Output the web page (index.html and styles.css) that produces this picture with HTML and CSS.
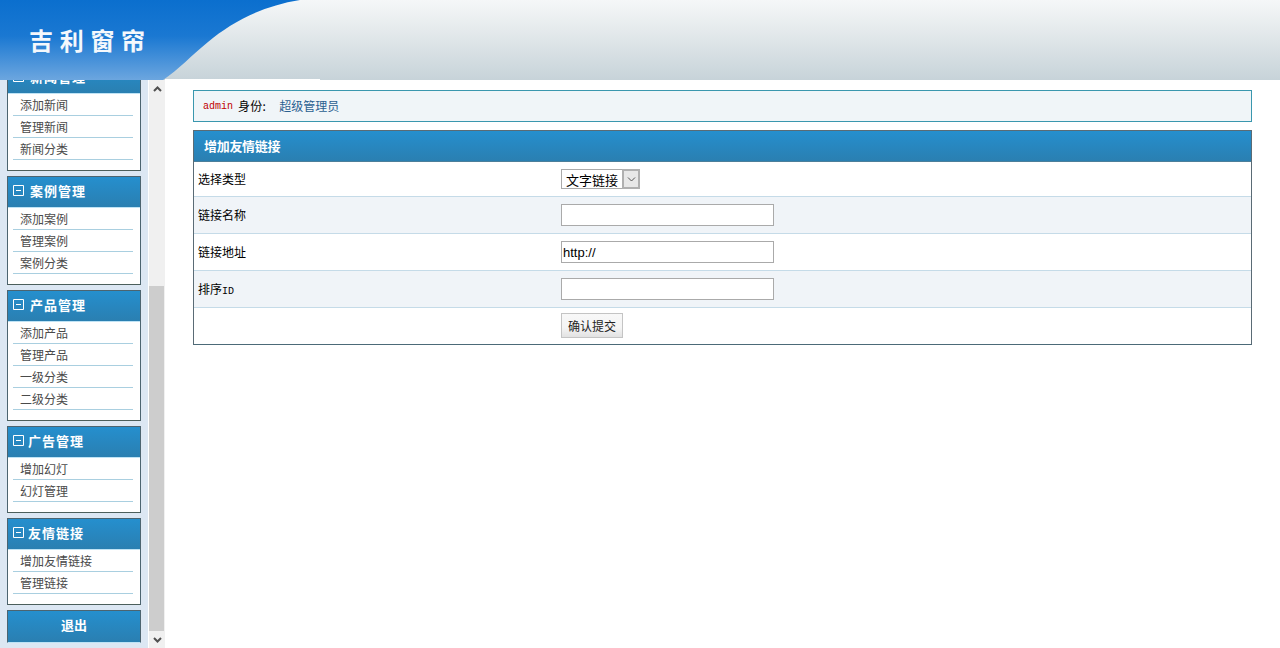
FILE: index.html
```html
<!DOCTYPE html>
<html lang="zh-CN">
<head>
<meta charset="utf-8">
<title>吉利窗帘</title>
<link rel="stylesheet" href="styles.css">
</head>
<body>
<header class="top">
  <svg class="top-art" width="320" height="80" viewBox="0 0 320 80" aria-hidden="true">
    <defs>
      <linearGradient id="blue" x1="0" y1="0" x2="0" y2="1">
        <stop offset="0" stop-color="#0b6fce"/>
        <stop offset="0.45" stop-color="#1a78d2"/>
        <stop offset="1" stop-color="#6ca6df"/>
      </linearGradient>
    </defs>
    <path d="M0 0H300C262 6 232 22 208 42C192 55 178 70 163 80H0Z" fill="url(#blue)"/>
    <rect x="165" y="79" width="155" height="1" fill="#fff"/>
  </svg>
  <div class="logo">吉利窗帘</div>
</header>
<div class="layout">
  <aside class="side">
    <div class="side-inner">
      <section class="group">
        <h3 class="group-title"><svg class="minus" width="11" height="11" viewBox="0 0 11 11"><path d="M.5.5h10v10H.5zM3 5.5h5" fill="none" stroke="#fff"/></svg><span class="gap7">新闻管理</span></h3>
        <ul class="menu"><li>添加新闻</li><li>管理新闻</li><li>新闻分类</li></ul>
      </section>
      <section class="group">
        <h3 class="group-title"><svg class="minus" width="11" height="11" viewBox="0 0 11 11"><path d="M.5.5h10v10H.5zM3 5.5h5" fill="none" stroke="#fff"/></svg><span class="gap7">案例管理</span></h3>
        <ul class="menu"><li>添加案例</li><li>管理案例</li><li>案例分类</li></ul>
      </section>
      <section class="group">
        <h3 class="group-title"><svg class="minus" width="11" height="11" viewBox="0 0 11 11"><path d="M.5.5h10v10H.5zM3 5.5h5" fill="none" stroke="#fff"/></svg><span class="gap7">产品管理</span></h3>
        <ul class="menu"><li>添加产品</li><li>管理产品</li><li>一级分类</li><li>二级分类</li></ul>
      </section>
      <section class="group">
        <h3 class="group-title"><svg class="minus" width="11" height="11" viewBox="0 0 11 11"><path d="M.5.5h10v10H.5zM3 5.5h5" fill="none" stroke="#fff"/></svg><span class="gap5">广告管理</span></h3>
        <ul class="menu"><li>增加幻灯</li><li>幻灯管理</li></ul>
      </section>
      <section class="group">
        <h3 class="group-title"><svg class="minus" width="11" height="11" viewBox="0 0 11 11"><path d="M.5.5h10v10H.5zM3 5.5h5" fill="none" stroke="#fff"/></svg><span class="gap5">友情链接</span></h3>
        <ul class="menu"><li>增加友情链接</li><li>管理链接</li></ul>
      </section>
      <div class="logout">退出</div>
    </div>
  </aside>
  <div class="scrollbar">
    <div class="scroll-btn"><svg width="9" height="6" viewBox="0 0 9 6"><path d="M1 5l3.5-3.5L8 5" fill="none" stroke="#505050" stroke-width="2"/></svg></div>
    <div class="scroll-track"><div class="scroll-thumb"></div></div>
    <div class="scroll-btn"><svg width="9" height="6" viewBox="0 0 9 6"><path d="M1 1l3.5 3.5L8 1" fill="none" stroke="#505050" stroke-width="2"/></svg></div>
  </div>
  <main class="main">
    <div class="notice"><span class="user">admin</span><span class="role">身份:</span><a class="role-link">超级管理员</a></div>
    <form class="panel">
      <div class="panel-title">增加友情链接</div>
      <div class="row row-first"><label class="cell-label">选择类型</label>
        <div class="select-wrap">
          <select class="select"><option>文字链接</option></select>
          <span class="select-arrow"><svg width="9" height="5" viewBox="0 0 9 5"><path d="M1 .5l3.5 3.5L8 .5" fill="none" stroke="#555"/></svg></span>
        </div>
      </div>
      <div class="row alt"><label class="cell-label">链接名称</label><input class="field" type="text"></div>
      <div class="row"><label class="cell-label">链接地址</label><input class="field" type="text" value="http://"></div>
      <div class="row alt"><label class="cell-label">排序<span class="mono">ID</span></label><input class="field" type="text"></div>
      <div class="row row-last"><span class="cell-label"></span><button class="submit" type="button">确认提交</button></div>
    </form>
  </main>
</div>
</body>
</html>
```
FILE: styles.css
```css
* { box-sizing: border-box; }
html, body { margin: 0; height: 100%; overflow: hidden; background: #fff; }
body { font: 12px/1.2 "Noto Sans CJK SC", "Liberation Sans", sans-serif; color: #000; }

.top {
  position: relative;
  height: 80px;
  background: linear-gradient(#f5f7f8, #e6ebed 35%, #c7d3d9);
}
.top-art { position: absolute; left: 0; top: 0; display: block; }
.logo {
  position: absolute;
  left: 29px;
  top: 23px;
  font-size: 24px;
  line-height: 34px;
  font-weight: 700;
  letter-spacing: 6.7px;
  color: #f4f8fc;
  white-space: nowrap;
}

.layout { display: flex; height: 568px; }

.side { width: 148px; flex: none; background: #dce7f3; overflow: hidden; }
.side-inner { margin-top: -18px; padding: 0 7px; display: flex; flex-direction: column; gap: 5px; }

.group { border: 1px solid #4c6470; border-bottom-color: #4c5f5c; background: #fff; }
.group-title {
  display: flex;
  align-items: center;
  height: 31px;
  margin: 0;
  padding: 0 0 3px 5px;
  border-bottom: 1px solid #bfe3f5;
  background: linear-gradient(#258fce, #2a7fb1);
  color: #fff;
  font-size: 13px;
  font-weight: 700;
}
.minus { flex: none; }
.gap7 { margin-left: 6px; letter-spacing: 1px; }
.gap5 { margin-left: 4px; letter-spacing: 1px; }

.menu { list-style: none; margin: 0; padding: 0 7px 10px 5px; }
.menu li {
  height: 22px;
  padding-left: 7px;
  border-bottom: 1px solid #a9cfe0;
  color: #4a4a4a;
  line-height: 21px;
  white-space: nowrap;
}

.logout {
  height: 33px;
  border: 1px solid #4c6470;
  border-bottom: 1px solid #bfe3f5;
  background: linear-gradient(#258fce, #2a7fb1);
  box-shadow: inset 0 -1px 0 #2a7fb1;
  color: #fff;
  font-size: 13px;
  font-weight: 700;
  line-height: 28px;
  text-align: center;
}

.scrollbar {
  width: 16px;
  flex: none;
  margin-left: 1px;
  display: flex;
  flex-direction: column;
  background: #f0f0f0;
}
.scroll-btn { height: 17px; flex: none; display: flex; align-items: center; justify-content: center; }
.scroll-track { flex: 1; display: flex; flex-direction: column; justify-content: flex-end; }
.scroll-thumb { height: 345px; margin-right: 1px; background: #cdcdcd; }

.main { flex: 1; min-width: 0; padding: 10px 28px 0; }

.notice {
  display: flex;
  align-items: center;
  height: 32px;
  padding-left: 9px;
  border: 1px solid #3a97ae;
  background: #f0f5f8;
}
.user { font: 10px "Liberation Mono", monospace; color: #c00000; }
.role { margin-left: 5px; letter-spacing: .3px; }
.role-link { margin-left: 13px; color: #2a6090; }

.panel {
  margin-top: 8px;
  border: 1px solid #5a6b75;
  border-bottom-color: #4c6a78;
}
.panel-title {
  height: 31px;
  padding-left: 10px;
  background: linear-gradient(#258fce, #2a7fb1);
  border-bottom: 1px solid #4c7f9a;
  color: #fff;
  font-size: 13px;
  letter-spacing: -.3px;
  font-weight: 700;
  line-height: 30px;
}
.row {
  display: flex;
  align-items: center;
  height: 37px;
  border-bottom: 1px solid #c5dbe8;
}
.row-first { height: 35px; }
.row-last { border-bottom: 0; height: 36px; }
.alt { background: #f0f4f8; }
.cell-label { width: 367px; flex: none; padding-left: 4px; }
.mono { font: 10px "Liberation Mono", monospace; }

.select-wrap { position: relative; width: 79px; height: 20px; }
.select {
  display: block;
  width: 100%;
  height: 100%;
  margin: 0;
  padding: 0 0 0 4px;
  appearance: none;
  border: 1px solid #aaa;
  border-radius: 0;
  background: #fff;
  color: #000;
  font: 13px "Noto Sans CJK SC", sans-serif;
}
.select-arrow {
  position: absolute;
  right: 0;
  top: 0;
  width: 18px;
  height: 20px;
  display: flex;
  align-items: center;
  justify-content: center;
  border: 2px solid #b0b0b0;
  background: #e8e8e8;
}
.field {
  width: 213px;
  height: 22px;
  margin: 0;
  padding: 0 1px;
  border: 1px solid #aaa;
  border-radius: 0;
  background: #fff;
  color: #000;
  font: 13px "Liberation Sans", sans-serif;
  outline: 0;
}
.submit {
  width: 62px;
  height: 25px;
  margin: 0 0 2px;
  padding: 0;
  border: 1px solid #c4c4c4;
  background: linear-gradient(#f8f8f8, #f4f4f4 60%, #e2e2e2);
  color: #222;
  font: 12px "Noto Sans CJK SC", sans-serif;
}
```
